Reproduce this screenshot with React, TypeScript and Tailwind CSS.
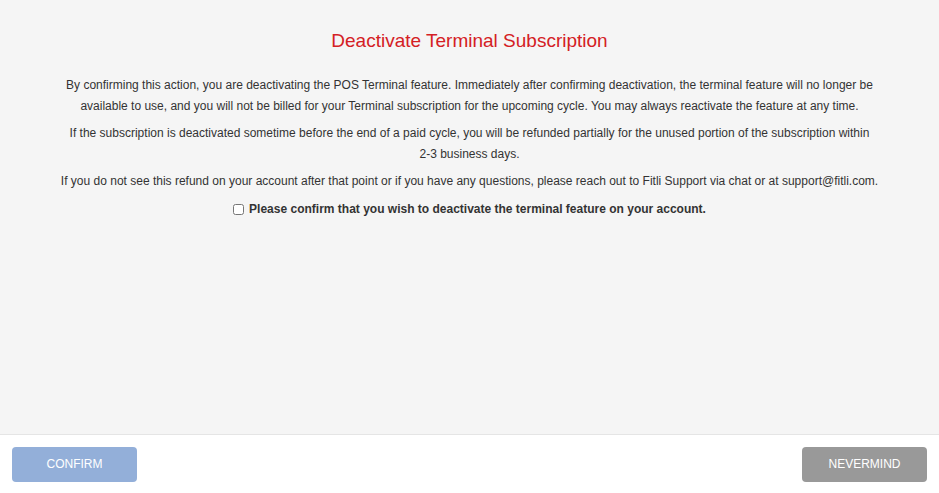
import React from "react";

export default function App() {
  return (
    <div className="w-[939px] h-[493px] flex flex-col bg-white" style={{ fontFamily: '"Liberation Sans", Arial, sans-serif' }}>
      <div className="flex-1 bg-[#f5f5f5] border-b border-[#e5e5e5] flex flex-col items-center pt-[27px] px-[58px]">
        <h1 className="text-[19px] leading-[28px] text-[#d42024] font-light">Deactivate Terminal Subscription</h1>
        <div className="mt-[20px] text-[12px] leading-[21px] text-[#333] text-center">
          <p>By confirming this action, you are deactivating the POS Terminal feature. Immediately after confirming deactivation, the terminal feature will no longer be available to use, and you will not be billed for your Terminal subscription for the upcoming cycle. You may always reactivate the feature at any time.</p>
          <p className="mt-[6px]">If the subscription is deactivated sometime before the end of a paid cycle, you will be refunded partially for the unused portion of the subscription within <span className="whitespace-nowrap">2-3 business</span> days.</p>
          <p className="mt-[6px]">If you do not see this refund on your account after that point or if you have any questions, please reach out to Fitli Support via chat or at support@fitli.com.</p>
          <label className="mt-[7px] flex items-center justify-center gap-[5px] font-bold">
            <input type="checkbox" className="w-[11px] h-[11px]" />
            <span>Please confirm that you wish to deactivate the terminal feature on your account.</span>
          </label>
        </div>
      </div>
      <div className="h-[58px] flex items-center justify-between px-[12px]">
        <button className="w-[125px] h-[35px] rounded-[4px] bg-[#93afd9] text-white text-[12px]">CONFIRM</button>
        <button className="w-[125px] h-[35px] rounded-[4px] bg-[#999999] text-white text-[12px]">NEVERMIND</button>
      </div>
    </div>
  );
}
